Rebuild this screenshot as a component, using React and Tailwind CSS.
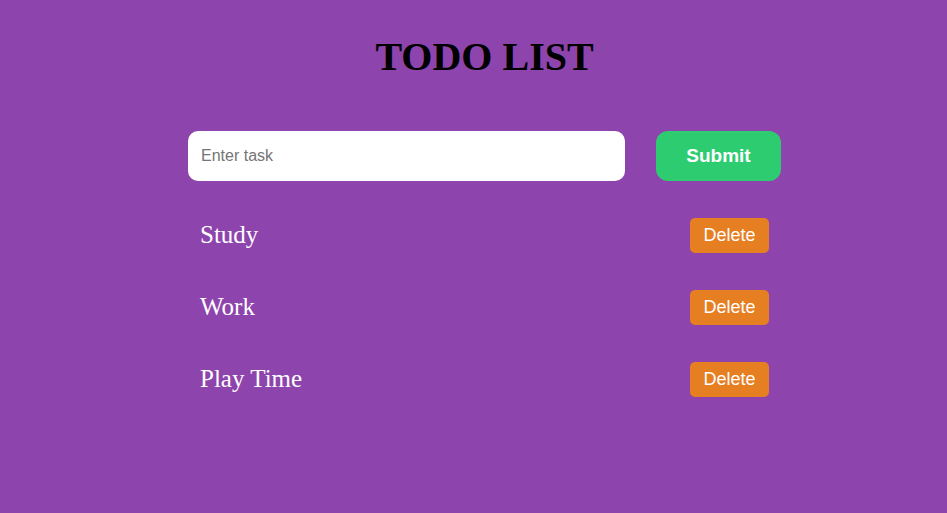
import { useState } from 'react'

export default function App() {
  const [tasks, setTasks] = useState(['Study', 'Work', 'Play Time'])
  const [text, setText] = useState('')

  const add = () => {
    if (!text.trim()) return
    setTasks([...tasks, text.trim()])
    setText('')
  }

  return (
    <div className="min-h-screen bg-[#8e44ad] pl-[22px] font-['Liberation_Serif',serif]">
      <div className="mx-auto w-[593px] pt-[34px]">
        {/* Title */}
        <h1 className="text-center text-[40px] leading-[46px] font-bold text-black">TODO LIST</h1>

        {/* Input row */}
        <div className="mt-[51px] flex gap-[31px]">
          <input
            value={text}
            onChange={(e) => setText(e.target.value)}
            placeholder="Enter task"
            className="h-[50px] w-[437px] rounded-[10px] bg-white px-[13px] font-['Liberation_Sans',sans-serif] text-[16px] text-black outline-none placeholder:text-[#757575]"
          />
          <button
            onClick={add}
            className="h-[50px] w-[125px] rounded-[12px] bg-[#2ecc71] font-['Liberation_Sans',sans-serif] text-[19px] font-bold text-white"
          >
            Submit
          </button>
        </div>

        {/* Tasks */}
        <ul className="mt-[18px]">
          {tasks.map((task, i) => (
            <li key={i} className="flex h-[72px] items-center justify-between px-[12px]">
              <span className="text-[25px] text-white">{task}</span>
              <button
                onClick={() => setTasks(tasks.filter((_, j) => j !== i))}
                className="h-[35px] w-[79px] rounded-[5px] bg-[#e67e22] font-['Liberation_Sans',sans-serif] text-[18px] text-white"
              >
                Delete
              </button>
            </li>
          ))}
        </ul>
      </div>
    </div>
  )
}
